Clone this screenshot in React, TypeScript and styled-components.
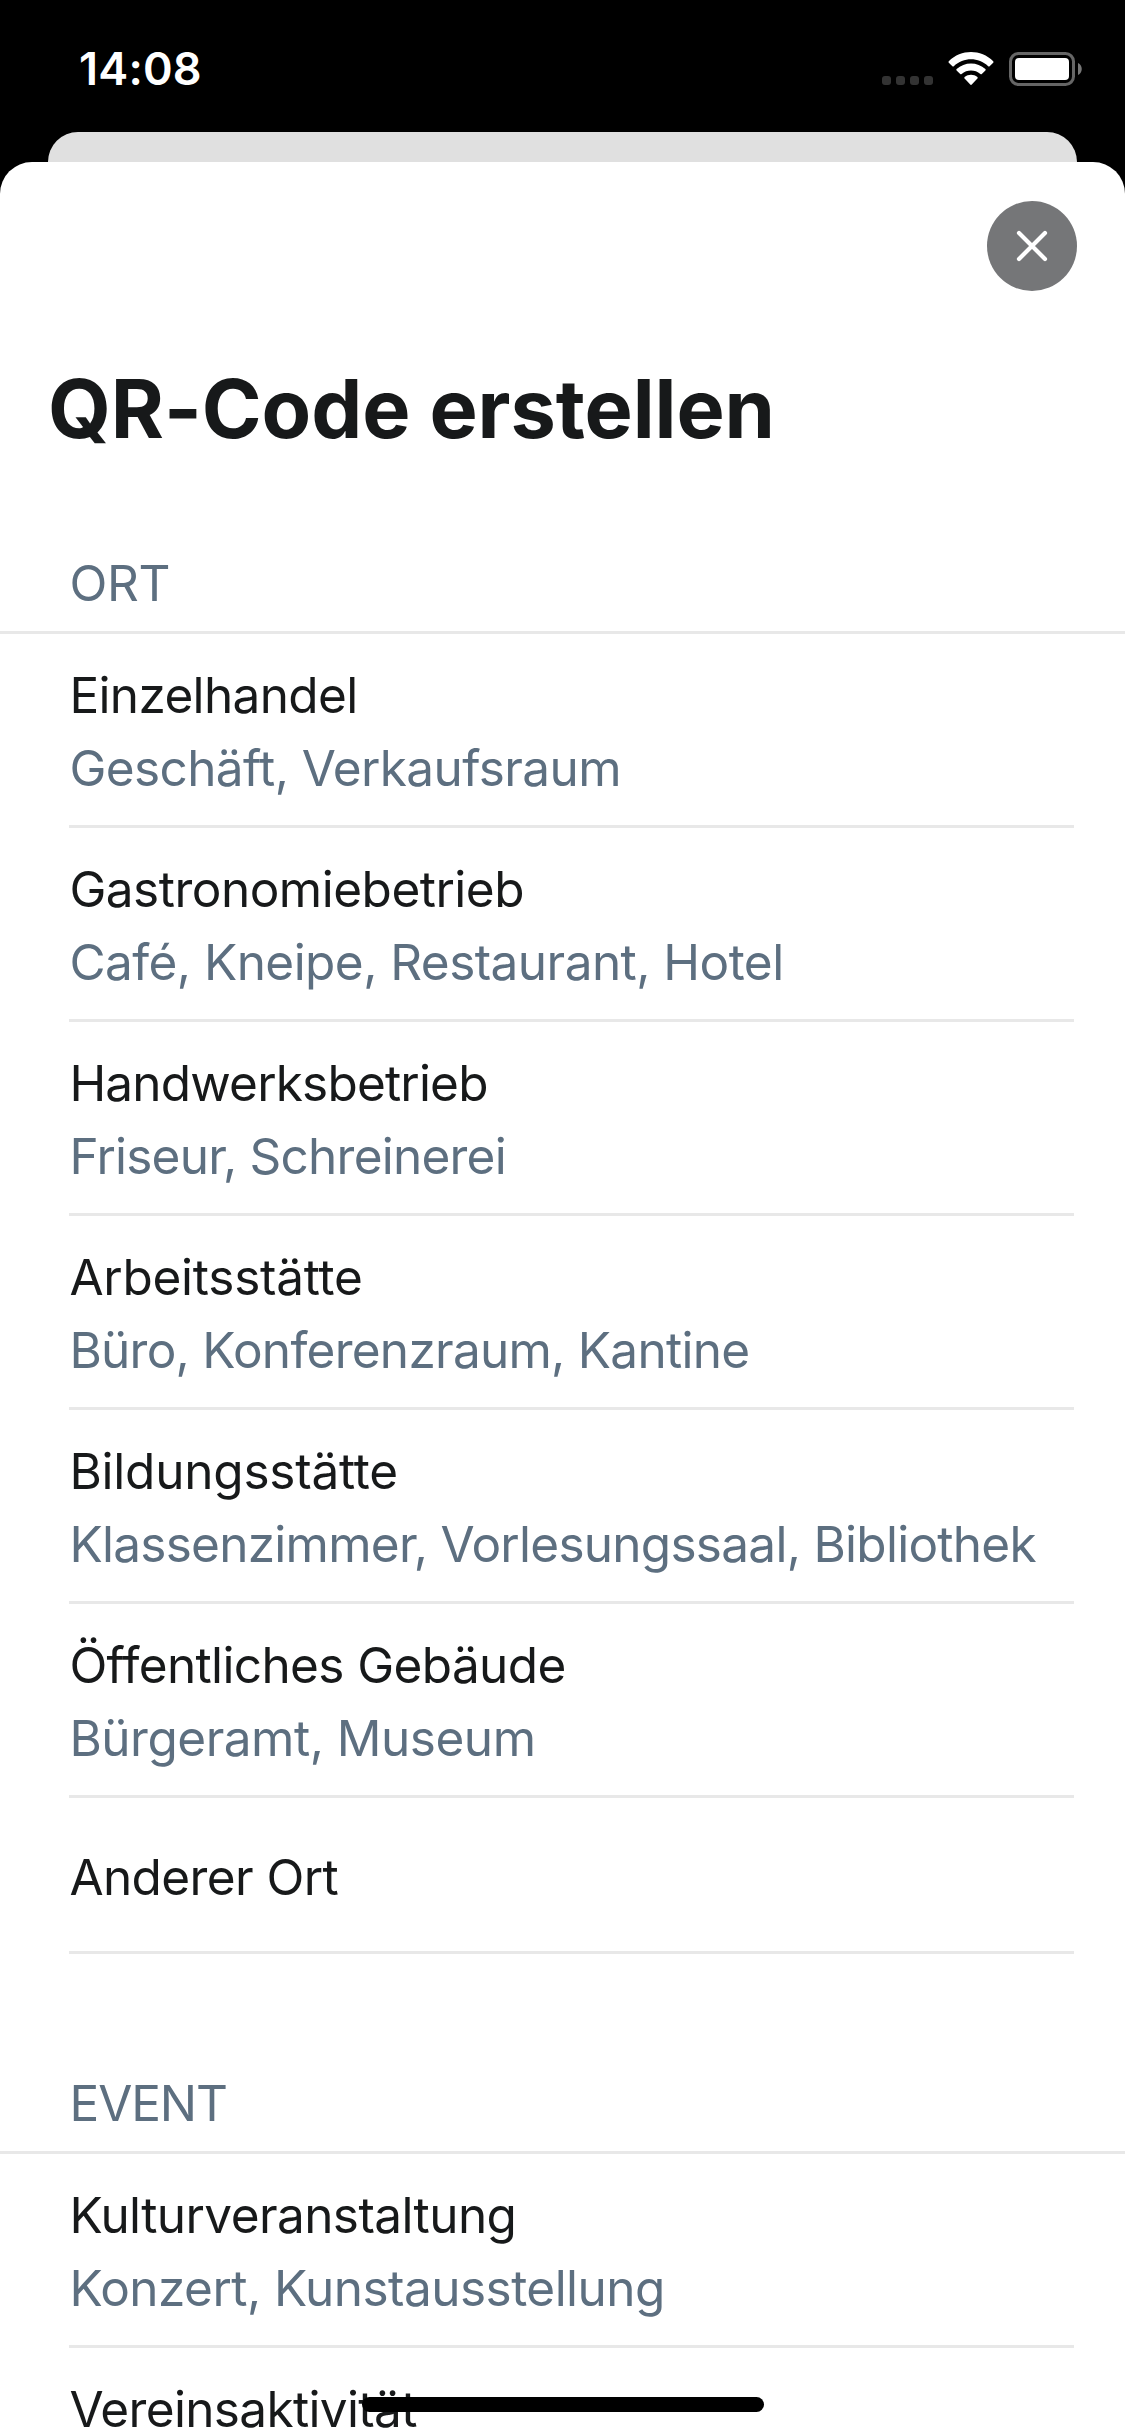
import React from "react";
import styled, { createGlobalStyle } from "styled-components";

const GlobalStyle = createGlobalStyle`
  * { box-sizing: border-box; }
  html, body { margin: 0; padding: 0; background: #000; }
  body { font-family: Inter, "Liberation Sans", sans-serif; }
`;

const Screen = styled.div`
  position: relative;
  display: flex;
  flex-direction: column;
  width: 1125px;
  height: 2436px;
  overflow: hidden;
  background: #000;
`;

const StatusBar = styled.header`
  display: flex;
  justify-content: space-between;
  flex: none;
  height: 132px;
  padding: 41px 43px 0 79px;
  color: #fff;
`;

const Clock = styled.time`
  font-size: 45px;
  font-weight: 600;
  line-height: 55px;
  letter-spacing: 0.2px;
`;

const StatusIcons = styled.div`
  display: flex;
  align-items: flex-start;
  padding-top: 11px;
`;

const SignalDots = styled.div`
  display: flex;
  gap: 5px;
  margin: 24px 15px 0 0;
`;

const Dot = styled.i`
  width: 9px;
  height: 9px;
  border-radius: 3px;
  background: #333;
`;

const WifiIcon = styled.svg`
  width: 46px;
  height: 34px;
  margin-right: 15px;
`;

const BatteryIcon = styled.svg`
  width: 73px;
  height: 34px;
`;

const BackSheet = styled.div`
  flex: none;
  height: 30px;
  margin: 0 48px;
  border-radius: 30px 30px 0 0;
  background: #e0e0e0;
`;

const Sheet = styled.main`
  flex: 1;
  min-height: 0;
  overflow: hidden;
  border-radius: 32px 32px 0 0;
  background: #fff;
`;

const SheetBar = styled.div`
  display: flex;
  justify-content: flex-end;
  height: 129px;
  padding: 39px 48px 0 0;
`;

const CloseButton = styled.button`
  display: flex;
  align-items: center;
  justify-content: center;
  width: 90px;
  height: 90px;
  padding: 0;
  border: 0;
  border-radius: 50%;
  background: #757678;
`;

const Title = styled.h1`
  margin: 69px 0 0 48px;
  font-size: 81px;
  font-weight: 700;
  line-height: 98px;
  letter-spacing: -0.09px;
  white-space: nowrap;
  color: #17191a;
`;

const Section = styled.section<{ $gap: number }>`
  padding-top: ${(p) => p.$gap}px;
`;

const SectionHeader = styled.h2<{ $tracking: number }>`
  margin: 0;
  height: 90px;
  padding-left: 69.5px;
  border-bottom: 3px solid #e8e8e8;
  font-size: 49.5px;
  font-weight: 400;
  line-height: 78px;
  letter-spacing: ${(p) => p.$tracking}px;
  color: #5d6f80;
`;

const List = styled.ul`
  margin: 0;
  padding: 0 51px 0 69px;
  list-style: none;
`;

const Row = styled.li<{ $single: boolean }>`
  display: flex;
  flex-direction: column;
  gap: 1px;
  height: ${(p) => (p.$single ? 156 : 194)}px;
  padding: ${(p) => (p.$single ? 43 : 25)}px 0 0 0.4px;
  border-bottom: 3px solid #e8e8e8;
  font-size: 49.5px;
  white-space: nowrap;
`;

const Name = styled.span<{ $tracking: number }>`
  line-height: 72px;
  letter-spacing: ${(p) => p.$tracking}px;
  color: #17191a;
`;

const Examples = styled(Name)`
  color: #5d6f80;
`;

const HomeIndicator = styled.div`
  position: absolute;
  left: 362px;
  bottom: 24px;
  width: 402px;
  height: 15px;
  border-radius: 8px;
  background: #000;
`;

type Label = { text: string; tracking: number };
type Item = { name: Label; examples?: Label; single?: boolean };
type Group = { title: Label; gap: number; items: Item[] };

const label = (text: string, tracking: number): Label => ({ text, tracking });

const groups: Group[] = [
  {
    title: label("ORT", -0.34),
    gap: 86,
    items: [
      { name: label("Einzelhandel", -0.65), examples: label("Geschäft, Verkaufsraum", -0.6) },
      { name: label("Gastronomiebetrieb", -0.5), examples: label("Café, Kneipe, Restaurant, Hotel", -0.55) },
      { name: label("Handwerksbetrieb", -0.81), examples: label("Friseur, Schreinerei", -0.77) },
      { name: label("Arbeitsstätte", -0.25), examples: label("Büro, Konferenzraum, Kantine", -0.73) },
      { name: label("Bildungsstätte", -0.22), examples: label("Klassenzimmer, Vorlesungssaal, Bibliothek", -0.73) },
      { name: label("Öffentliches Gebäude", -0.62), examples: label("Bürgeramt, Museum", -0.49) },
      { name: label("Anderer Ort", -0.6), single: true },
    ],
  },
  {
    title: label("EVENT", -1.1),
    gap: 110,
    items: [
      { name: label("Kulturveranstaltung", -0.58), examples: label("Konzert, Kunstausstellung", -0.54) },
      { name: label("Vereinsaktivität", -0.66) },
    ],
  },
];

export default function App() {
  return (
    <Screen>
      <GlobalStyle />
      <StatusBar>
        <Clock>14:08</Clock>
        <StatusIcons>
          <SignalDots>
            <Dot />
            <Dot />
            <Dot />
            <Dot />
          </SignalDots>
          <WifiIcon viewBox="0 0 46 34" fill="#fff">
            <path d="M0.8 9.2 C13 -3 33 -3 45.2 9.2 Q45.9 10 45.2 10.7 L41.6 14.2 Q40.9 14.8 40.2 14.2 C30.5 5 15.5 5 5.8 14.2 Q5.1 14.8 4.4 14.2 L0.8 10.7 Q0.1 10 0.8 9.2 Z" />
            <path d="M8.6 17.1 C16.5 9.6 29.5 9.6 37.4 17.1 Q38.1 17.8 37.4 18.5 L33.8 22 Q33.1 22.6 32.4 22 C27 17.4 19 17.4 13.6 22 Q12.9 22.6 12.2 22 L8.6 18.5 Q7.9 17.8 8.6 17.1 Z" />
            <path d="M16.6 25 C20.3 22.1 25.7 22.1 29.4 25 Q30.1 25.7 29.4 26.5 L23.8 32.6 Q23 33.3 22.2 32.6 L16.6 26.5 Q15.9 25.7 16.6 25 Z" />
          </WifiIcon>
          <BatteryIcon viewBox="0 0 73 34">
            <rect x="1.5" y="1.5" width="63" height="31" rx="8" fill="none" stroke="#666" strokeWidth="3" />
            <rect x="6" y="6" width="54" height="22" rx="4" fill="#fff" />
            <path d="M69 11 C74 13 74 21 69 23 Z" fill="#777" />
          </BatteryIcon>
        </StatusIcons>
      </StatusBar>
      <BackSheet />
      <Sheet>
        <SheetBar>
          <CloseButton aria-label="Schließen">
            <svg width="34" height="34" viewBox="0 0 34 34" stroke="#fff" strokeWidth="4.2" strokeLinecap="round">
              <path d="M4 4 L30 30 M30 4 L4 30" />
            </svg>
          </CloseButton>
        </SheetBar>
        <Title>QR-Code erstellen</Title>
        {groups.map((group) => (
          <Section key={group.title.text} $gap={group.gap}>
            <SectionHeader $tracking={group.title.tracking}>{group.title.text}</SectionHeader>
            <List>
              {group.items.map(({ name, examples, single }) => (
                <Row key={name.text} $single={!!single}>
                  <Name $tracking={name.tracking}>{name.text}</Name>
                  {examples && <Examples $tracking={examples.tracking}>{examples.text}</Examples>}
                </Row>
              ))}
            </List>
          </Section>
        ))}
      </Sheet>
      <HomeIndicator />
    </Screen>
  );
}
